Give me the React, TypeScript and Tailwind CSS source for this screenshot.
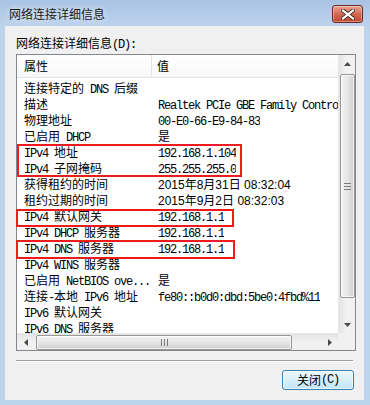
import React from 'react'

const rows: [string, string, boolean?][] = [
  ['连接特定的 DNS 后缀', ''],
  ['描述', 'Realtek PCIe GBE Family Controller'],
  ['物理地址', '00-E0-66-E9-84-83'],
  ['已启用 DHCP', '是'],
  ['IPv4 地址', '192.168.1.104'],
  ['IPv4 子网掩码', '255.255.255.0'],
  ['获得租约的时间', '2015年8月31日 08:32:04', true],
  ['租约过期的时间', '2015年9月2日 08:32:03', true],
  ['IPv4 默认网关', '192.168.1.1'],
  ['IPv4 DHCP 服务器', '192.168.1.1'],
  ['IPv4 DNS 服务器', '192.168.1.1'],
  ['IPv4 WINS 服务器', ''],
  ['已启用 NetBIOS ove...', '是'],
  ['连接-本地 IPv6 地址', 'fe80::b0d0:dbd:5be0:4fbd%11'],
  ['IPv6 默认网关', ''],
  ['IPv6 DNS 服务器', ''],
]

// SimSun-ish mix: CJK full width, latin half width mono
function Txt({ s }: { s: string }) {
  const parts = s.split(/([\u0000-\u00ff]+)/).filter(Boolean)
  return (
    <>
      {parts.map((p, i) =>
        /^[\u0000-\u00ff]+$/.test(p) ? (
          <span key={i} className="font-['Liberation_Mono',monospace] tracking-[-1.2px]">{p}</span>
        ) : (
          <span key={i}>{p}</span>
        )
      )}
    </>
  )
}

function Arrow({ dir }: { dir: 'up' | 'down' | 'left' | 'right' }) {
  const pts = {
    up: '0,4 3.5,0 7,4',
    down: '0,0 7,0 3.5,4',
    left: '4,0 4,7 0,3.5',
    right: '0,0 0,7 4,3.5',
  }[dir]
  const w = dir === 'up' || dir === 'down' ? 7 : 4
  const h = dir === 'up' || dir === 'down' ? 4 : 7
  return (
    <svg width={w} height={h} viewBox={`0 0 ${w} ${h}`}>
      <polygon points={pts} fill="#4a4a4a" />
    </svg>
  )
}

export default function App() {
  return (
    <div className="w-[370px] h-[405px] flex flex-col bg-[#bcd3ec] font-['Noto_Sans_CJK_SC',sans-serif] text-[12px] text-black overflow-hidden">
      {/* ── Title bar ── */}
      <div className="h-[26px] shrink-0 pt-[2px] pl-[9px] pr-[7px] flex items-center justify-between bg-gradient-to-b from-[#a9c3e3] to-[#bdd3ec]">
        <span className="text-[12px] leading-none text-[#1b1b1b] [text-shadow:0_0_6px_rgba(255,255,255,0.9)]">网络连接详细信息</span>
        <button className="w-[31px] h-[18px] rounded-[3px] border border-[#6b2a24] bg-gradient-to-b from-[#e8a493] via-[#d46a52] to-[#c2462c] flex items-center justify-center shadow-[inset_0_0_0_1px_rgba(255,255,255,0.35)]">
          <svg width="14" height="11" viewBox="0 0 14 11">
            <path d="M2 1.5 L12 9.5 M12 1.5 L2 9.5" stroke="#4a2a2a" strokeWidth="4" strokeLinecap="square" />
            <path d="M2 1.5 L12 9.5 M12 1.5 L2 9.5" stroke="#ffffff" strokeWidth="2.2" strokeLinecap="square" />
          </svg>
        </button>
      </div>

      {/* ── Client area ── */}
      <div className="flex-1 ml-[5px] mr-[6px] mb-[5px] bg-[#f0f0f0] flex flex-col">
        <div className="pt-[10px] pl-[11px] leading-[14px] whitespace-pre">
          <Txt s="网络连接详细信息(D):" />
        </div>

        {/* List box */}
        <div className="relative mt-[2px] ml-[11px] w-[340px] h-[297px] border border-[#828790] bg-white flex flex-col">
          <div className="flex h-[278px]">
            <div className="w-[321px] overflow-hidden flex flex-col">
              {/* header */}
              <div className="h-[23px] shrink-0 flex bg-gradient-to-b from-white to-[#f7f8f9] border-b border-[#e5e5e5]">
                <div className="w-[135px] pl-[7px] flex items-center border-r border-[#e3e3e3]">属性</div>
                <div className="pl-[5px] flex items-center">值</div>
              </div>
              <div className="pt-[2px] flex flex-col">
                {rows.map(([k, v, sans], i) => (
                  <div key={i} className="h-[16px] shrink-0 flex leading-[16px] whitespace-pre">
                    <div className="w-[135px] shrink-0 pl-[7px] overflow-hidden">
                      <Txt s={k} />
                    </div>
                    <div className="pl-[6px] overflow-hidden">
                      {sans ? (
                        <span className="font-['Liberation_Sans','Noto_Sans_CJK_SC',sans-serif]">{v}</span>
                      ) : (
                        <Txt s={v} />
                      )}
                    </div>
                  </div>
                ))}
              </div>
            </div>

            {/* vertical scrollbar */}
            <div className="w-[17px] flex flex-col items-center bg-gradient-to-r from-[#e4e4e4] via-[#f2f2f2] to-[#efefef] border-l border-[#e8e8e8]">
              <div className="h-[17px] w-full flex items-center justify-center">
                <Arrow dir="up" />
              </div>
              <div className="mt-[2px] w-[15px] h-[224px] rounded-[2px] border border-[#979797] bg-gradient-to-r from-[#f4f4f4] via-[#e6e6e6] to-[#cfcfcf] flex flex-col items-center justify-center gap-[2px] shadow-[inset_0_0_0_1px_rgba(255,255,255,0.7)]">
                <div className="w-[7px] h-px bg-[#7a7a7a]" />
                <div className="w-[7px] h-px bg-[#7a7a7a]" />
                <div className="w-[7px] h-px bg-[#7a7a7a]" />
              </div>
              <div className="flex-1" />
              <div className="h-[17px] w-full flex items-center justify-center">
                <Arrow dir="down" />
              </div>
            </div>
          </div>

          {/* horizontal scrollbar */}
          <div className="flex h-[17px]">
            <div className="w-[321px] flex items-center bg-gradient-to-b from-[#e4e4e4] via-[#f2f2f2] to-[#efefef] border-t border-[#e8e8e8]">
              <div className="w-[17px] h-full flex items-center justify-center">
                <Arrow dir="left" />
              </div>
              <div className="ml-[2px] w-[256px] h-[15px] rounded-[2px] border border-[#979797] bg-gradient-to-b from-[#f4f4f4] via-[#e6e6e6] to-[#cfcfcf] flex items-center justify-center gap-[2px] shadow-[inset_0_0_0_1px_rgba(255,255,255,0.7)]">
                <div className="w-px h-[7px] bg-[#7a7a7a]" />
                <div className="w-px h-[7px] bg-[#7a7a7a]" />
                <div className="w-px h-[7px] bg-[#7a7a7a]" />
              </div>
              <div className="flex-1" />
              <div className="w-[17px] h-full flex items-center justify-center">
                <Arrow dir="right" />
              </div>
            </div>
            <div className="w-[17px] bg-[#f0f0f0]" />
          </div>

          {/* red annotation boxes */}
          <div className="absolute left-0 top-[89px] w-[225px] h-[33px] border-2 border-[#ee1b1b]" />
          <div className="absolute left-[-1px] top-[154px] w-[218px] h-[18px] border-2 border-[#ee1b1b]" />
          <div className="absolute left-[-1px] top-[185px] w-[219px] h-[19px] border-2 border-[#ee1b1b]" />
        </div>

        {/* separator */}
        <div className="mt-[9px] ml-[11px] w-[337px] border-t border-[#a0a0a0] border-b border-b-white" />

        {/* button row */}
        <div className="mt-[8px] flex justify-end pr-[10px]">
          <button className="w-[72px] h-[20px] rounded-[3px] border border-[#3c7fb1] bg-gradient-to-b from-[#eaf6fd] via-[#d9f0fc] to-[#bee6fd] flex items-center justify-center leading-none whitespace-pre shadow-[inset_0_0_0_1px_rgba(255,255,255,0.6)]">
            <Txt s="关闭(C)" />
          </button>
        </div>
      </div>
    </div>
  )
}
